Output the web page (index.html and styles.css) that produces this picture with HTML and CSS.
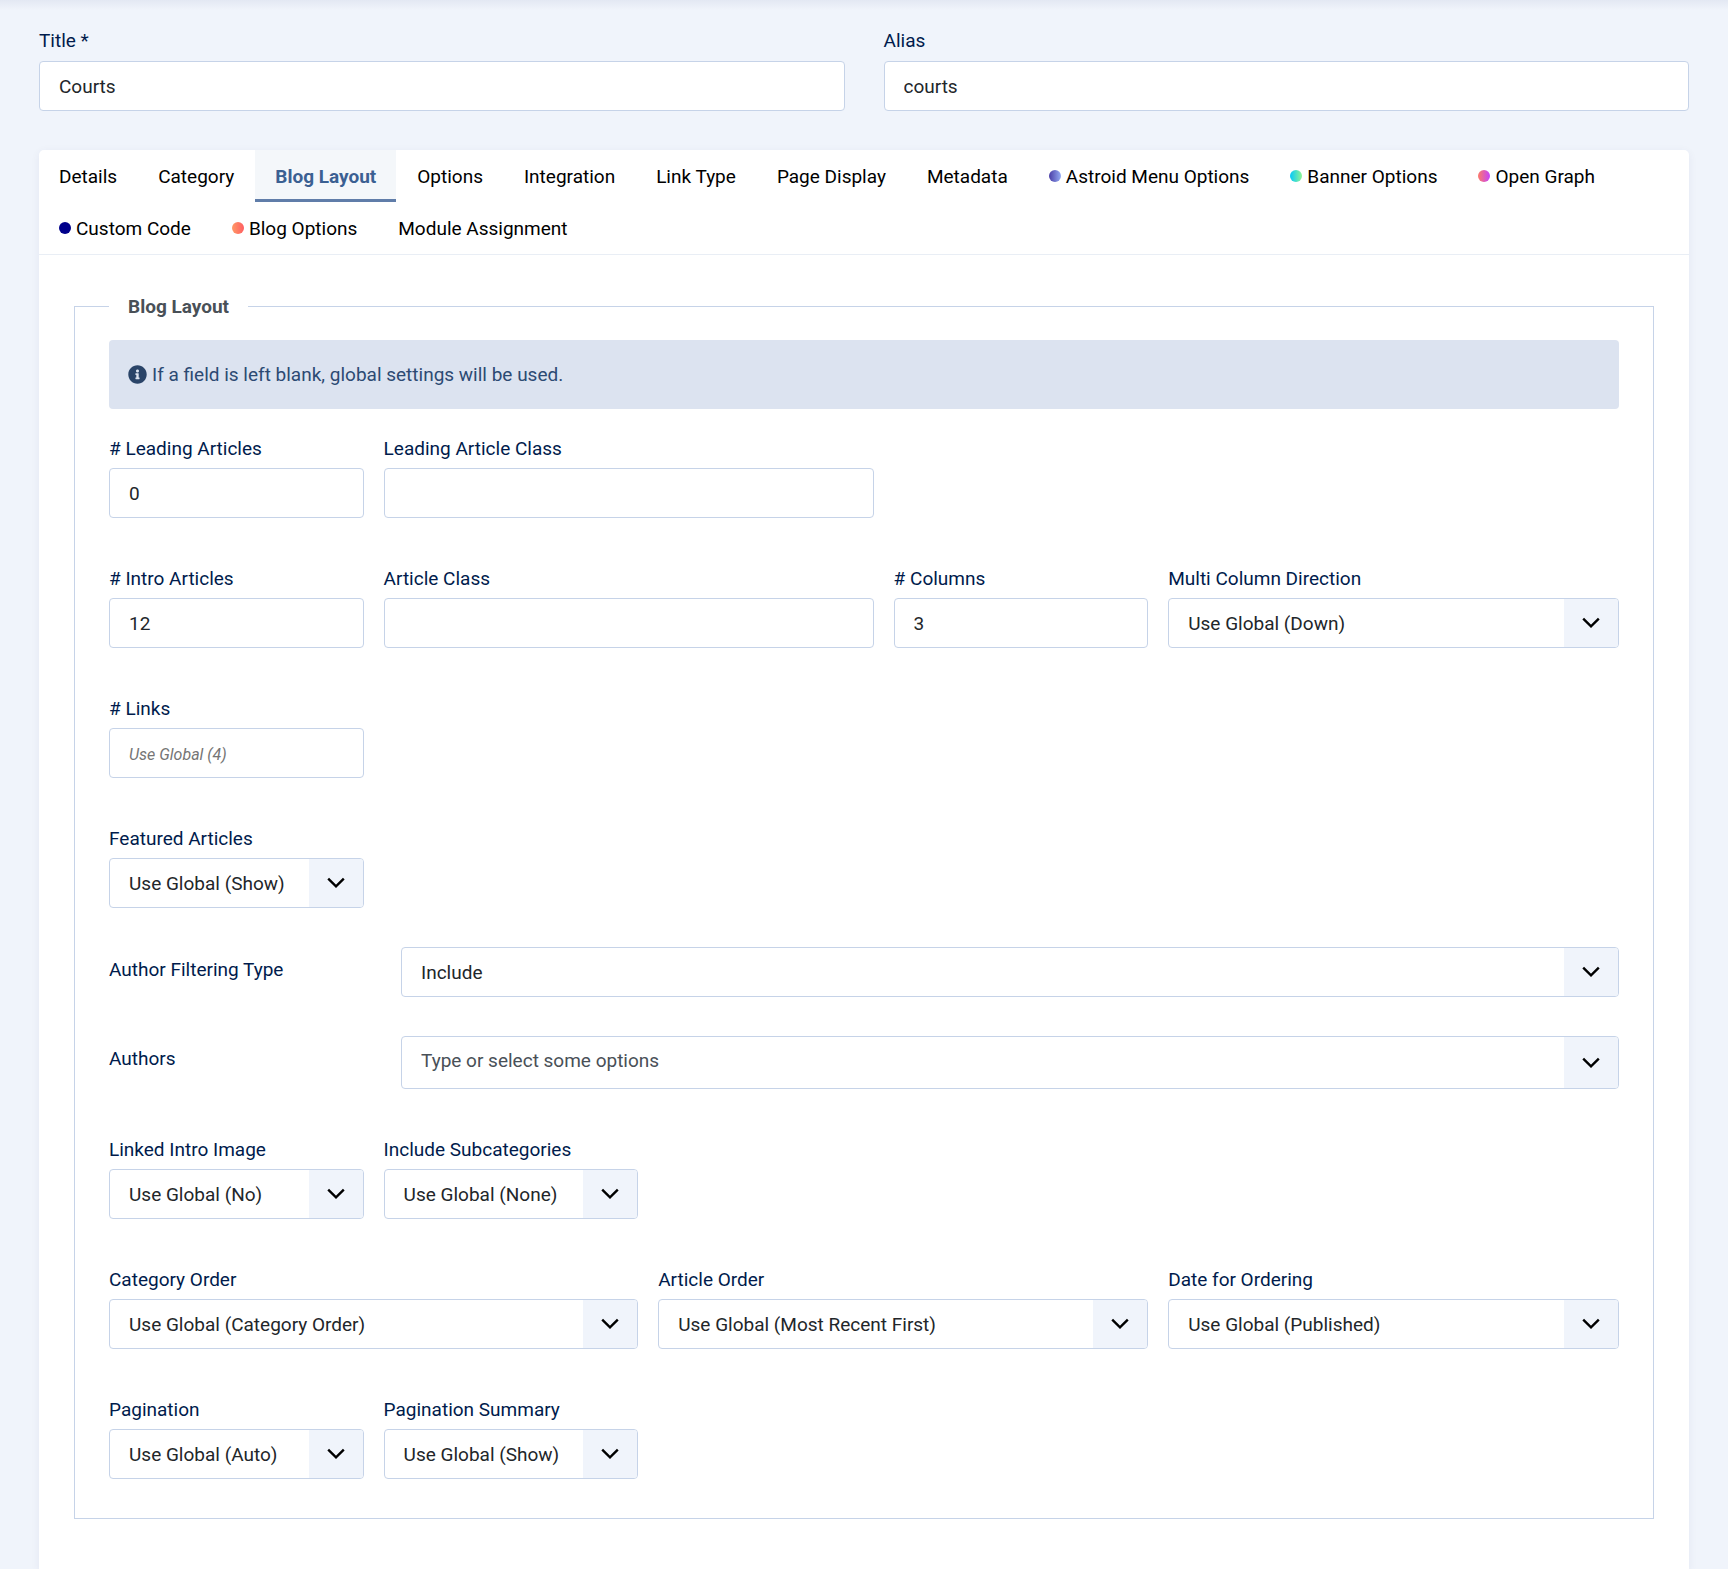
FILE: index.html
```
<!DOCTYPE html>
<html lang="en">
<head>
    <meta charset="UTF-8">
    <meta name="viewport" content="width=device-width, initial-scale=1.0">
    <title>Menus: Edit Item</title>
    <link rel="stylesheet" href="styles.css">
</head>
<body>
    <!-- Shared icons -->
    <svg class="sprite" aria-hidden="true">
        <symbol id="chevron" viewBox="0 0 18 12">
            <path d="M1.2 1.6 L9 9.3 L16.8 1.6" fill="none" stroke="#000" stroke-width="2.4"/>
        </symbol>
        <symbol id="info" viewBox="0 0 512 512">
            <path fill="currentColor" d="M256 8C119 8 8 119 8 256s111 248 248 248 248-111 248-248S393 8 256 8zm0 110c23 0 42 19 42 42s-19 42-42 42-42-19-42-42 19-42 42-42zm56 254c0 7-5 12-12 12h-88c-7 0-12-5-12-12v-24c0-7 5-12 12-12h12v-64h-12c-7 0-12-5-12-12v-24c0-7 5-12 12-12h64c7 0 12 5 12 12v100h12c7 0 12 5 12 12v24z"/>
        </symbol>
    </svg>

    <form class="item-form">
        <div class="title-row">
            <div class="title-field">
                <label for="title">Title *</label>
                <input type="text" id="title" class="form-control" value="Courts">
            </div>
            <div class="title-field">
                <label for="alias">Alias</label>
                <input type="text" id="alias" class="form-control" value="courts">
            </div>
        </div>

        <div class="card">
            <div class="tabs" role="tablist">
                <button type="button" role="tab">Details</button>
                <button type="button" role="tab">Category</button>
                <button type="button" role="tab" class="active" aria-selected="true">Blog Layout</button>
                <button type="button" role="tab">Options</button>
                <button type="button" role="tab">Integration</button>
                <button type="button" role="tab">Link Type</button>
                <button type="button" role="tab">Page Display</button>
                <button type="button" role="tab">Metadata</button>
                <button type="button" role="tab"><span class="dot dot-astroid"></span>Astroid Menu Options</button>
                <button type="button" role="tab"><span class="dot dot-banner"></span>Banner Options</button>
                <button type="button" role="tab"><span class="dot dot-graph"></span>Open Graph</button>
                <button type="button" role="tab"><span class="dot dot-code"></span>Custom Code</button>
                <button type="button" role="tab"><span class="dot dot-blog"></span>Blog Options</button>
                <button type="button" role="tab">Module Assignment</button>
            </div>

            <fieldset>
                <legend>Blog Layout</legend>

                <div class="alert">
                    <svg class="info-icon" aria-hidden="true"><use href="#info"/></svg>
                    <span>If a field is left blank, global settings will be used.</span>
                </div>

                <div class="form-grid">
                    <div class="field span-7">
                        <label for="num_leading">&#35; Leading Articles</label>
                        <input type="text" id="num_leading" class="form-control" value="0">
                    </div>
                    <div class="field span-13">
                        <label for="leading_class">Leading Article Class</label>
                        <input type="text" id="leading_class" class="form-control">
                    </div>
                </div>

                <div class="form-grid">
                    <div class="field span-7">
                        <label for="num_intro">&#35; Intro Articles</label>
                        <input type="text" id="num_intro" class="form-control" value="12">
                    </div>
                    <div class="field span-13">
                        <label for="article_class">Article Class</label>
                        <input type="text" id="article_class" class="form-control">
                    </div>
                    <div class="field span-7">
                        <label for="num_columns">&#35; Columns</label>
                        <input type="text" id="num_columns" class="form-control" value="3">
                    </div>
                    <div class="field span-12">
                        <label for="direction">Multi Column Direction</label>
                        <div class="select">
                            <select id="direction" class="form-control"><option>Use Global (Down)</option></select>
                            <span class="arrow"><svg><use href="#chevron"/></svg></span>
                        </div>
                    </div>
                </div>

                <div class="form-grid">
                    <div class="field span-7">
                        <label for="num_links">&#35; Links</label>
                        <input type="text" id="num_links" class="form-control" placeholder="Use Global (4)">
                    </div>
                </div>

                <div class="form-grid">
                    <div class="field span-7">
                        <label for="featured">Featured Articles</label>
                        <div class="select">
                            <select id="featured" class="form-control"><option>Use Global (Show)</option></select>
                            <span class="arrow"><svg><use href="#chevron"/></svg></span>
                        </div>
                    </div>
                </div>

                <div class="inline-field">
                    <label for="author_type">Author Filtering Type</label>
                    <div class="select">
                        <select id="author_type" class="form-control"><option>Include</option></select>
                        <span class="arrow"><svg><use href="#chevron"/></svg></span>
                    </div>
                </div>

                <div class="inline-field">
                    <label for="authors">Authors</label>
                    <div class="select">
                        <input type="text" id="authors" class="form-control choices" placeholder="Type or select some options">
                        <span class="arrow"><svg><use href="#chevron"/></svg></span>
                    </div>
                </div>

                <div class="form-grid">
                    <div class="field span-7">
                        <label for="link_image">Linked Intro Image</label>
                        <div class="select">
                            <select id="link_image" class="form-control"><option>Use Global (No)</option></select>
                            <span class="arrow"><svg><use href="#chevron"/></svg></span>
                        </div>
                    </div>
                    <div class="field span-7">
                        <label for="subcategories">Include Subcategories</label>
                        <div class="select">
                            <select id="subcategories" class="form-control"><option>Use Global (None)</option></select>
                            <span class="arrow"><svg><use href="#chevron"/></svg></span>
                        </div>
                    </div>
                </div>

                <div class="form-grid">
                    <div class="field span-14">
                        <label for="category_order">Category Order</label>
                        <div class="select">
                            <select id="category_order" class="form-control"><option>Use Global (Category Order)</option></select>
                            <span class="arrow"><svg><use href="#chevron"/></svg></span>
                        </div>
                    </div>
                    <div class="field span-13">
                        <label for="article_order">Article Order</label>
                        <div class="select">
                            <select id="article_order" class="form-control"><option>Use Global (Most Recent First)</option></select>
                            <span class="arrow"><svg><use href="#chevron"/></svg></span>
                        </div>
                    </div>
                    <div class="field span-12">
                        <label for="order_date">Date for Ordering</label>
                        <div class="select">
                            <select id="order_date" class="form-control"><option>Use Global (Published)</option></select>
                            <span class="arrow"><svg><use href="#chevron"/></svg></span>
                        </div>
                    </div>
                </div>

                <div class="form-grid">
                    <div class="field span-7">
                        <label for="pagination">Pagination</label>
                        <div class="select">
                            <select id="pagination" class="form-control"><option>Use Global (Auto)</option></select>
                            <span class="arrow"><svg><use href="#chevron"/></svg></span>
                        </div>
                    </div>
                    <div class="field span-7">
                        <label for="pagination_summary">Pagination Summary</label>
                        <div class="select">
                            <select id="pagination_summary" class="form-control"><option>Use Global (Show)</option></select>
                            <span class="arrow"><svg><use href="#chevron"/></svg></span>
                        </div>
                    </div>
                </div>
            </fieldset>
        </div>
    </form>
</body>
</html>
```
FILE: styles.css
```
/* Basic reset */
* {
    margin: 0;
    padding: 0;
    box-sizing: border-box;
}

body {
    font-family: Roboto, sans-serif;
    font-size: 19px;
    line-height: 27px;
    color: #22262a;
    background: linear-gradient(#e3e8f3, #f0f4fb 10px) #f0f4fb;
    min-height: 100vh;
}

.sprite {
    position: absolute;
    width: 0;
    height: 0;
}

.item-form {
    display: flex;
    flex-direction: column;
    min-height: 100vh;
    padding: 27px 39px 0;
}

label {
    display: block;
    color: #001b4c;
}

/* Text boxes and drop-downs */
.form-control {
    display: block;
    width: 100%;
    height: 50px;
    padding: 0 19px;
    font: inherit;
    color: #22262a;
    background-color: #fff;
    border: 1px solid #c6d3e8;
    border-radius: 4px;
}

.form-control::placeholder {
    font-size: 16px;
    font-style: italic;
    color: #757575;
}

select.form-control {
    appearance: none;
    padding-right: 56px;
}

.form-control.choices {
    height: 53px;
    padding-bottom: 4px;
}

.choices::placeholder {
    font-size: 19px;
    font-style: normal;
    color: #495057;
}

.select {
    position: relative;
}

.arrow {
    position: absolute;
    top: 1px;
    right: 1px;
    bottom: 1px;
    width: 54px;
    display: flex;
    align-items: center;
    justify-content: center;
    background-color: #f0f4fb;
    border-radius: 0 3px 3px 0;
    pointer-events: none;
}

.arrow svg {
    width: 18px;
    height: 12px;
}

/* Title and alias */
.title-row {
    display: grid;
    grid-template-columns: 1fr 1fr;
    gap: 39px;
    margin-bottom: 39px;
}

.title-field label {
    margin-bottom: 7px;
}

/* Card with the tabs */
.card {
    flex: 1;
    padding-bottom: 51px;
    background-color: #fff;
    border-radius: 5px 5px 0 0;
    box-shadow: 0 2px 10px rgba(20, 40, 100, 0.06);
}

.tabs {
    display: flex;
    flex-wrap: wrap;
    column-gap: 1px;
    border-bottom: 1px solid #e9eef5;
}

.tabs button {
    display: flex;
    align-items: center;
    height: 52px;
    padding: 3px 20px 0;
    font: inherit;
    color: #000;
    background: none;
    border: none;
    border-bottom: 3px solid transparent;
    cursor: pointer;
}

.tabs .active {
    font-weight: 700;
    color: #3b6092;
    background-color: #f4f7fa;
    border-bottom-color: #607da9;
}

.dot {
    width: 12px;
    height: 12px;
    margin-right: 5px;
    border-radius: 50%;
}

.dot-astroid {
    background: linear-gradient(to right, #4a3da6, #93aaf3);
}

.dot-banner {
    background: linear-gradient(to right, #04c9fb, #8ff594);
}

.dot-graph {
    background: linear-gradient(to right, #fc7a68, #c644fc);
}

.dot-code {
    background: #00008b;
}

.dot-blog {
    background: linear-gradient(to right, #ff9966, #ff5e62);
}

/* Fieldset */
fieldset {
    margin: 38px 35px 0;
    padding: 20px 34px 0;
    border: 1px solid #c6d3e8;
}

legend {
    padding: 0 19px;
    font-weight: 700;
    color: #495057;
}

.alert {
    display: flex;
    align-items: center;
    gap: 5px;
    margin-bottom: 18px;
    padding: 21px 19px;
    color: #2c4a73;
    background-color: #dce3f0;
    border-radius: 4px;
}

.info-icon {
    width: 19px;
    height: 19px;
    color: #2a4468;
}

/* Form rows */
.form-grid {
    display: grid;
    grid-template-columns: repeat(39, minmax(0, 1fr));
    column-gap: 20px;
    margin-bottom: 39px;
}

.field label {
    padding: 8px 0 6px;
}

.span-7 {
    grid-column: span 7;
}

.span-12 {
    grid-column: span 12;
}

.span-13 {
    grid-column: span 13;
}

.span-14 {
    grid-column: span 14;
}

.inline-field {
    display: flex;
    margin-bottom: 39px;
}

.inline-field label {
    width: 292px;
    padding-top: 9px;
}

.inline-field .select {
    flex: 1;
}
```
